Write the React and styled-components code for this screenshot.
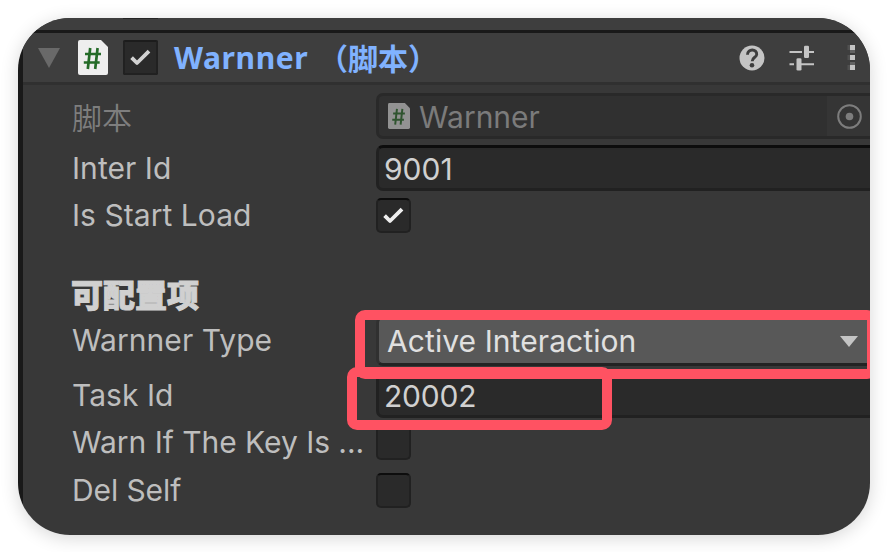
import React from "react";
import styled, { createGlobalStyle, css } from "styled-components";

const GlobalStyle = createGlobalStyle`
  * { box-sizing: border-box; }
  body { margin: 0; background: #fff; font-family: "Inter", "Noto Sans CJK SC", sans-serif; overflow: hidden; }
  svg { display: block; flex: none; }
`;

const Page = styled.div`
  height: 552px;
  padding: 17.5px 17px 17px 18px;
`;

const Card = styled.section`
  position: relative;
  width: 852px;
  height: 517.5px;
  border-radius: 52px;
  overflow: hidden;
  background: linear-gradient(to right, #191919 5px, #383838 5px);
  display: flex;
  flex-direction: column;
`;

const Shadow = styled.div`
  width: 852px;
  border-radius: 52px;
  box-shadow: 0 3px 18px rgba(0, 0, 0, 0.16);
`;

const PreviousEdge = styled.div`
  flex: none;
  height: 15.5px;
  background: #3e3e3e;
  border-bottom: 3px solid #191919;
  display: flex;
  padding-left: 105px;
`;

const PreviousToggle = styled.div`
  width: 35px;
  height: 1px;
  background: #252525;
`;

const Header = styled.header`
  flex: none;
  height: 52px;
  margin-left: 5px;
  padding-left: 15px;
  background: #3e3e3e;
  border-bottom: 3px solid #303030;
  display: flex;
  align-items: center;
`;

const Title = styled.h1`
  margin: 0 0 0 16px;
  flex: 1;
  display: flex;
  font: 700 30px/49px "Noto Sans", "Noto Sans CJK SC", sans-serif;
  color: #80b2ff;
  white-space: nowrap;
`;

const TitleName = styled.span`
  width: 144px;
  letter-spacing: 0.6px;
`;

const TitleKind = styled.span`
  font-family: "Noto Sans CJK SC", sans-serif;
`;

const Actions = styled.div`
  display: flex;
  align-items: center;
  padding-right: 15px;
`;

const Body = styled.div`
  flex: 1;
  padding: 8px 0 0 54px;
`;

const Row = styled.div`
  display: grid;
  grid-template-columns: 304px 1fr;
  grid-template-rows: 100%;
  align-items: center;
  height: ${(p) => p.$height}px;
  margin-bottom: ${(p) => p.$gap || 0}px;
`;

const Label = styled.label`
  font-size: 30px;
  line-height: 34px;
  font-weight: ${(p) => (p.$disabled ? 350 : 400)};
  letter-spacing: ${(p) => p.$spacing ?? 0.05}px;
  padding-top: ${(p) => (p.$disabled ? 3 : 0)}px;
  padding-bottom: ${(p) => p.$raise || 0}px;
  color: ${(p) => (p.$disabled ? "#7e7e7e" : "#bebebe")};
  white-space: nowrap;
`;

const Section = styled.h2`
  height: 47px;
  margin: 36px 0 0 -1px;
  font: 900 32px/49px "Noto Sans CJK SC", sans-serif;
  color: #d0d0d0;
  -webkit-text-stroke: 1px #d0d0d0;
`;

const Field = styled.div`
  height: 100%;
  display: flex;
  align-items: center;
  padding: 2px 0 0 5px;
  border: 3px solid #212121;
  border-top-color: #0d0d0d;
  border-right: 0;
  border-radius: 7px 0 0 7px;
  background: #2a2a2a;
  color: #d0d0d0;
  font-size: 30px;
  font-weight: 400;
  letter-spacing: ${(p) => p.$spacing ?? 0}px;
  ${(p) => p.$disabled && css`
    background: #303030;
    border-color: #292929;
    color: #7b7b7b;
    padding: 0 0 0 9px;
    gap: 9px;
  `}
`;

const FieldText = styled.span`
  padding-top: 2px;
`;

const ObjectPicker = styled.div`
  width: 43px;
  height: 40px;
  margin-left: auto;
  padding-left: 10px;
  display: flex;
  align-items: center;
  background: #353535;
`;

const Select = styled.div`
  height: 100%;
  display: flex;
  align-items: center;
  justify-content: space-between;
  padding: 0 12px 0 8px;
  border: 3px solid #303030;
  border-bottom-color: #232323;
  border-right: 0;
  border-radius: 7px 0 0 7px;
  background: #585858;
  color: #e0e0e0;
  font-size: 30px;
  font-weight: 400;
  letter-spacing: 0.08px;
`;

const CheckFrame = styled.div`
  flex: none;
  width: 35px;
  height: 35px;
  margin-left: ${(p) => p.$offset || 0}px;
  border: 2px solid #212121;
  border-top-color: ${(p) => (p.$muted ? "#1c1c1c" : "#0d0d0d")};
  border-radius: ${(p) => (p.$muted ? 2 : 5)}px;
  background: #2a2a2a;
  display: flex;
  align-items: center;
  justify-content: center;
`;

const Highlight = styled.div`
  position: absolute;
  border: 10px solid #ff5262;
  border-radius: 10px;
  left: ${(p) => p.$x}px;
  top: ${(p) => p.$y}px;
  width: ${(p) => p.$w}px;
  height: ${(p) => p.$h}px;
`;

const Foldout = styled.div`
  margin-right: 18px;
`;

function Checkbox({ checked, offset, muted }) {
  return (
    <CheckFrame $offset={offset} $muted={muted}>
      {checked && (
        <svg width="23" height="20" viewBox="0 0 23 20" fill="none">
          <path d="M2.6 9.6 8 15 20 3.2" stroke={muted ? "#d2d2d2" : "#eeeeee"} strokeWidth="3.8" strokeLinejoin="round" />
        </svg>
      )}
    </CheckFrame>
  );
}

function ScriptIcon({ width, height, fill, ink }) {
  return (
    <svg width={width} height={height} viewBox="0 0 30 35" preserveAspectRatio="none">
      <path d="M2 0H23L30 7V33Q30 35 28 35H2Q0 35 0 33V2Q0 0 2 0Z" fill={fill} />
      <path d="M12.2 8 9.8 29M19.6 8 17.2 29M7 14H23M5.8 22.5H21.7" stroke={ink} strokeWidth="2.7" fill="none" />
    </svg>
  );
}

export default function App() {
  return (
    <>
      <GlobalStyle />
      <Page>
        <Shadow>
          <Card>
            <PreviousEdge><PreviousToggle /></PreviousEdge>
            <Header>
              <Foldout>
                <svg width="22" height="20" viewBox="0 0 22 20"><path d="M0 0H22L11 20Z" fill="#696969" /></svg>
              </Foldout>
              <ScriptIcon width={30} height={35} fill="#eeeeee" ink="#246b28" />
              <Checkbox checked muted offset={15} />
              <Title><TitleName>Warnner</TitleName><TitleKind>（脚本）</TitleKind></Title>
              <Actions>
                <svg width="116" height="26" viewBox="0 0 116 26" fill="#c4c4c4">
                  <circle cx="13" cy="13" r="12.5" />
                  <path d="M8.5 9.7C8.5 3.2 18.2 3.6 17.7 9.5C17.5 12.3 13.2 12.4 13.2 16.2" stroke="#3e3e3e" strokeWidth="2.9" fill="none" />
                  <circle cx="13" cy="20.3" r="2.3" fill="#3e3e3e" />
                  <path d="M50.5 6H63V8H50.5ZM70 6H75V8H70ZM50.5 18.2H55V20.2H50.5ZM62 18.2H75V20.2H62Z" />
                  <rect x="65" y=".7" width="5" height="12.3" rx="1.3" />
                  <rect x="57.5" y="13.3" width="5" height="12.3" rx="1.3" />
                  <path d="M108.5 0H116V5H108.5ZM108.5 10H116V15H108.5ZM108.5 20H116V25H108.5Z" fill="#505050" />
                  <path d="M111 0H116V5H111ZM111 10H116V15H111ZM111 20H116V25H111Z" />
                  <path d="M111 5H116V8H111ZM111 17H116V20H111Z" fill="#626262" />
                </svg>
              </Actions>
            </Header>
            <Body>
              <Row $height={46} $gap={6}>
                <Label $disabled $spacing={0}>脚本</Label>
                <Field $disabled>
                  <ScriptIcon width={22} height={26} fill="#929292" ink="#2f542f" />
                  <FieldText>Warnner</FieldText>
                  <ObjectPicker>
                    <svg width="25" height="25" viewBox="0 0 25 25">
                      <circle cx="12.5" cy="12.5" r="11.3" fill="none" stroke="#7d7d7d" strokeWidth="2" />
                      <circle cx="12.5" cy="12.5" r="3.8" fill="#7d7d7d" />
                    </svg>
                  </ObjectPicker>
                </Field>
              </Row>
              <Row $height={46} $gap={7}><Label>Inter Id</Label><Field>9001</Field></Row>
              <Row $height={35}><Label $raise={1}>Is Start Load</Label><Checkbox checked /></Row>
              <Section>可配置项</Section>
              <Row $height={50} $gap={5}>
                <Label $raise={2}>Warnner Type</Label>
                <Select>
                  Active Interaction
                  <svg width="18" height="11" viewBox="0 0 18 11"><path d="M0 0H18L9 11Z" fill="#c4c4c4" /></svg>
                </Select>
              </Row>
              <Row $height={47} $gap={7}><Label>Task Id</Label><Field $spacing={-0.2}>20002</Field></Row>
              <Row $height={35} $gap={13}><Label $spacing={-0.03} $raise={1}>Warn If The Key Is ...</Label><Checkbox /></Row>
              <Row $height={35}><Label $spacing={-0.1} $raise={1}>Del Self</Label><Checkbox /></Row>
            </Body>
            <Highlight $x={336.5} $y={292} $w={522.5} $h={69.5} />
            <Highlight $x={329} $y={349.5} $w={265} $h={62.5} />
          </Card>
        </Shadow>
      </Page>
    </>
  );
}
